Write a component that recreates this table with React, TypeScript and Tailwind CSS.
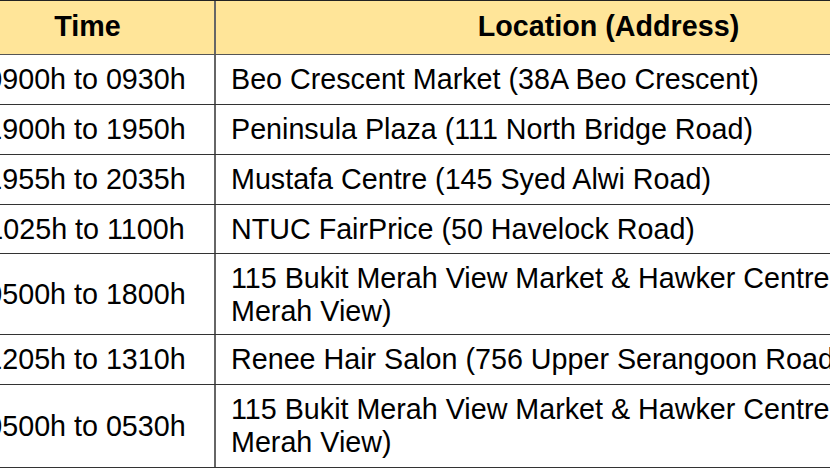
const rows = [
  { time: "0900h to 0930h", place: "Beo Crescent Market (38A Beo Crescent)", h: "h-[50px]" },
  { time: "1900h to 1950h", place: "Peninsula Plaza (111 North Bridge Road)", h: "h-[50px]" },
  { time: "1955h to 2035h", place: "Mustafa Centre (145 Syed Alwi Road)", h: "h-[50px]" },
  { time: "1025h to 1100h", place: "NTUC FairPrice (50 Havelock Road)", h: "h-[49px]" },
  {
    time: "0500h to 1800h",
    place: "115 Bukit Merah View Market & Hawker Centre (115 Bukit Merah View)",
    h: "h-[81px]",
  },
  { time: "1205h to 1310h", place: "Renee Hair Salon (756 Upper Serangoon Road)", h: "h-[50px]" },
  {
    time: "0500h to 0530h",
    place: "115 Bukit Merah View Market & Hawker Centre (115 Bukit Merah View)",
    h: "h-[83px]",
  },
];

export default function App() {
  return (
    <div className="w-[830px] h-[468px] overflow-hidden bg-white text-black font-['Liberation_Sans',Arial,sans-serif] text-[28.7px] leading-[33px]">
      <div className="ml-[-39px] w-[1040px] border-t border-[#222]">
        {/* header */}
        <div className="flex h-[54px] bg-[#ffe599] border-b border-[#555]">
          <div className="w-[255px] shrink-0 border-r-2 border-[#666] pt-[9px] text-center font-bold">
            Time
          </div>
          <div className="flex-1 pt-[9px] text-center font-bold">Location (Address)</div>
        </div>

        {rows.map((r, i) => (
          <div key={i} className={`flex ${r.h} border-b border-[#333]`}>
            <div className="w-[255px] shrink-0 border-r-2 border-[#666] flex items-center justify-center whitespace-nowrap pr-[3px]">
              {r.time}
            </div>
            <div className="flex-1 px-[15px] pt-[8px]">{r.place}</div>
          </div>
        ))}
      </div>
    </div>
  );
}
